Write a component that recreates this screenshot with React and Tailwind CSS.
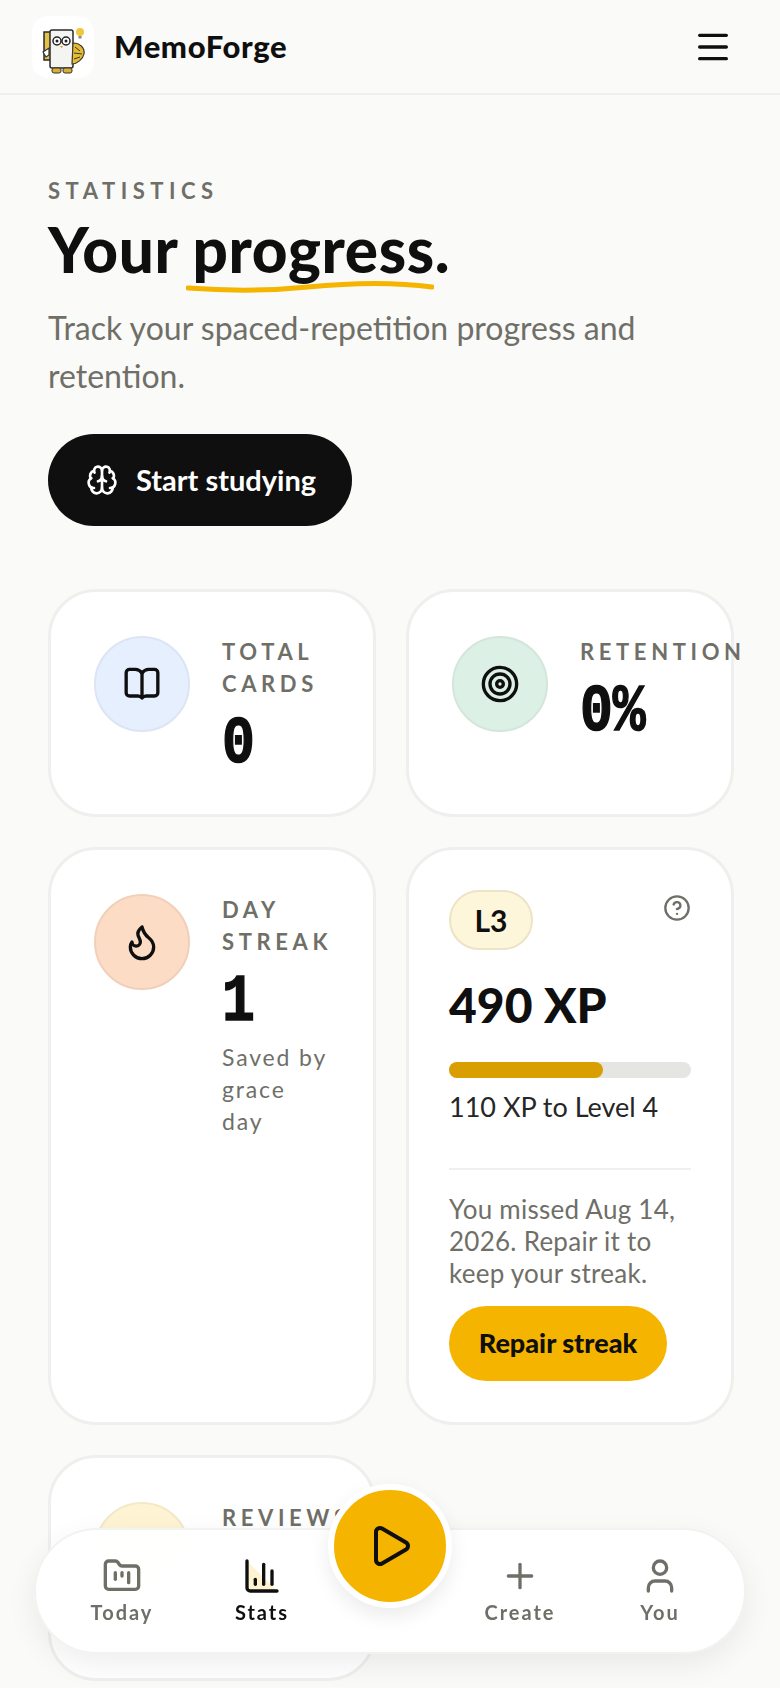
import React from "react";
import { Brain, CircleHelp, Flame, FolderKanban, ChartColumn, Menu, Play, Plus, Target, User } from "lucide-react";

const BookIcon = () => (
  <svg width="40" height="40" viewBox="0 0 24 24" fill="none" stroke="#0f0f0f" strokeWidth="2" strokeLinecap="round" strokeLinejoin="round">
    <path d="M12 5.5C11 4 9.5 3.2 8 3.2H4.5a2 2 0 0 0-2 2v12a2 2 0 0 0 2 2h5c1 0 1.8.4 2.5 1.2.7-.8 1.5-1.2 2.5-1.2h5a2 2 0 0 0 2-2v-12a2 2 0 0 0-2-2H16c-1.5 0-3 .8-4 2.3z" />
    <path d="M12 5.5v14" />
  </svg>
);

const Logo = () => (
  <svg width="62" height="62" viewBox="0 0 62 62" className="rounded-2xl bg-white">
    <path d="M12 16h24v28H12z" fill="#e3c04a" stroke="#2a2a2a" strokeWidth="1.5" />
    <rect x="18" y="14" width="23" height="38" rx="2" fill="#f4f4f2" stroke="#2a2a2a" strokeWidth="1.5" />
    <circle cx="25" cy="25" r="4" fill="#fff" stroke="#222" strokeWidth="1.5" />
    <circle cx="34" cy="25" r="4" fill="#fff" stroke="#222" strokeWidth="1.5" />
    <circle cx="25" cy="25" r="1.5" fill="#222" />
    <circle cx="34" cy="25" r="1.5" fill="#222" />
    <path d="M28 30h3l-1.5 2z" fill="#d9a400" />
    <path d="M41 27c7 0 12 5 11 11-1 5-7 10-12 10z" fill="#e6bb30" stroke="#3a3a3a" strokeWidth="1.2" />
    <path d="M43 31l5 4M42 37l8 1M42 43l6-2" stroke="#3a3a3a" strokeWidth="1" />
    <circle cx="48" cy="16" r="4" fill="#f0c63c" />
    <rect x="46.5" y="20" width="3" height="2.5" fill="#888" />
    <path d="M11 36l6-4v7l-3 2z" fill="#fff" stroke="#333" strokeWidth="1.2" />
    <rect x="20" y="52" width="9" height="5" rx="2" fill="#d9b030" stroke="#333" />
    <rect x="31" y="52" width="9" height="5" rx="2" fill="#d9b030" stroke="#333" />
  </svg>
);

const Stat = ({ circle, icon, label, value, note, className = "" }) => (
  <div className={`flex gap-8 rounded-[48px] border-[3px] border-[#efefed] bg-white px-[43px] pt-[44px] pb-[34px] ${className}`}>
    <div className={`flex h-24 w-24 shrink-0 items-center justify-center rounded-full border-2 ${circle}`}>{icon}</div>
    <div className="min-w-0 flex-1">
      <p className="text-[22px] leading-8 font-bold tracking-[0.21em] text-[#6f6f68] uppercase">{label}</p>
      {value && (
        <p className="h-20 origin-left translate-y-[5px] scale-x-[0.83] font-['Liberation_Mono',monospace] text-[66px] leading-20 font-bold text-[#0f0f0f] [-webkit-text-stroke:1.5px_#0f0f0f]">{value}</p>
      )}
      {note && <p className="mt-[3px] text-[23px] leading-8 tracking-[0.08em] text-[#6f6f68]">{note}</p>}
    </div>
  </div>
);

const NavItem = ({ icon, label, active }) => (
  <div className={`flex w-[100px] flex-col items-center gap-[2px] ${active ? "text-[#0f0f0f]" : "text-[#6f6f68]"}`}>
    {icon}
    <span className="text-[20px] leading-7 font-bold tracking-[0.1em]">{label}</span>
  </div>
);

const App = () => {
  return (
    <div className="relative h-[1688px] overflow-hidden bg-[#fafaf8] font-['Lato',sans-serif] text-[#0f0f0f]">
      <header className="flex h-[95px] items-center justify-between border-b-2 border-[#efefed] pr-[47px] pl-8">
        <div className="flex items-center gap-5">
          <Logo />
          <span className="text-[31px] font-black tracking-[0.02em]">MemoForge</span>
        </div>
        <Menu size={40} strokeWidth={2} />
      </header>

      <main className="pt-[80px] pr-[46px] pl-12">
        <p className="text-[22px] leading-8 font-bold tracking-[0.25em] text-[#6f6f68]">STATISTICS</p>
        <h1 className="mt-[6px] text-[62px] leading-[72px] font-black tracking-[0.01em]">
          Your{" "}
          <span className="relative inline-block">
            progress
            <svg className="absolute top-[66px] -left-[7px]" width="248" height="14" viewBox="0 0 248 14" fill="none">
              <path d="M2 9c40 3 80 3 120-1 40-4 80-6 124 0" stroke="#f5b400" strokeWidth="5" strokeLinecap="round" />
            </svg>
          </span>
          .
        </h1>
        <p className="mt-[19px] text-[32px] leading-[48px] text-[#6f6f68]">Track your spaced-repetition progress and retention.</p>

        <button className="mt-[34px] flex h-[92px] w-[304px] items-center gap-[18px] rounded-full bg-[#0f0f0f] pl-[38px] text-[29px] font-bold text-white">
          <Brain size={32} />
          Start studying
        </button>

        <div className="mt-[63px] grid grid-cols-2 items-stretch gap-x-[30px] gap-y-[30px]">
          <Stat circle="bg-[#e6effd] border-[#dce5f3]" icon={<BookIcon />} label="Total cards" value="0" />
          <Stat circle="bg-[#ddf0e5] border-[#d3e6db]" icon={<Target size={40} />} label="Retention" value="0%" />
          <Stat
            circle="bg-[#fddcc6] border-[#f0d0ba]"
            icon={<Flame size={40} />}
            label="Day streak"
            value="1"
            note={<>Saved by<br />grace<br />day</>}
          />

          <div className="rounded-[48px] border-[3px] border-[#efefed] bg-white px-10 pt-10 pb-[41px]">
            <div className="flex items-start justify-between">
              <span className="flex h-[60px] w-[84px] items-center justify-center rounded-full border-2 border-[#ece4c4] bg-[#fef6da] text-[30px] font-bold">L3</span>
              <CircleHelp size={28} className="mt-1 text-[#6f6f68]" />
            </div>
            <p className="mt-5 text-[48px] leading-[70px] font-black">490 XP</p>
            <div className="mt-[22px] h-4 rounded-full bg-[#e5e5e3]">
              <div className="h-4 w-[154px] rounded-full bg-[#d99e00]" />
            </div>
            <p className="mt-[11px] text-[27px] leading-9 text-[#262626]">110 XP to Level 4</p>
            <div className="mt-[43px] border-t-2 border-[#efefed] pt-[23px]">
              <p className="text-[26px] leading-8 tracking-[0.01em] text-[#6f6f68]">You missed Aug 14, 2026. Repair it to keep your streak.</p>
              <button className="mt-[17px] h-[75px] w-[218px] rounded-full bg-[#f5b400] text-[27px] font-black">Repair streak</button>
            </div>
          </div>

          <Stat className="h-[226px]" circle="bg-[#fef3d2] border-[#f3e8c8]" label="Reviews" />
        </div>
      </main>

      <nav className="absolute right-[34px] bottom-[34px] left-[34px] flex h-[126px] items-center justify-between rounded-full border-2 border-[#f2f2f0] bg-white/[0.97] pr-[34px] pl-[36px] shadow-[0_10px_30px_rgba(0,0,0,0.07)] backdrop-blur-xl">
        <div className="flex gap-10">
          <NavItem icon={<FolderKanban size={40} strokeWidth={2} />} label="Today" />
          <NavItem icon={<ChartColumn size={40} strokeWidth={2} fill="#fdf3d0" />} label="Stats" active />
        </div>
        <div className="flex gap-10">
          <NavItem icon={<Plus size={40} strokeWidth={2} />} label="Create" />
          <NavItem icon={<User size={40} strokeWidth={2} />} label="You" />
        </div>
      </nav>
      <button className="absolute top-[1484px] left-[328px] flex h-[124px] w-[124px] items-center justify-center rounded-full border-[6px] border-white bg-[#f5b400] shadow-[0_8px_20px_rgba(0,0,0,0.08)]">
        <Play size={48} strokeWidth={2} className="text-[#0f0f0f]" />
      </button>
    </div>
  );
};

export default App;
